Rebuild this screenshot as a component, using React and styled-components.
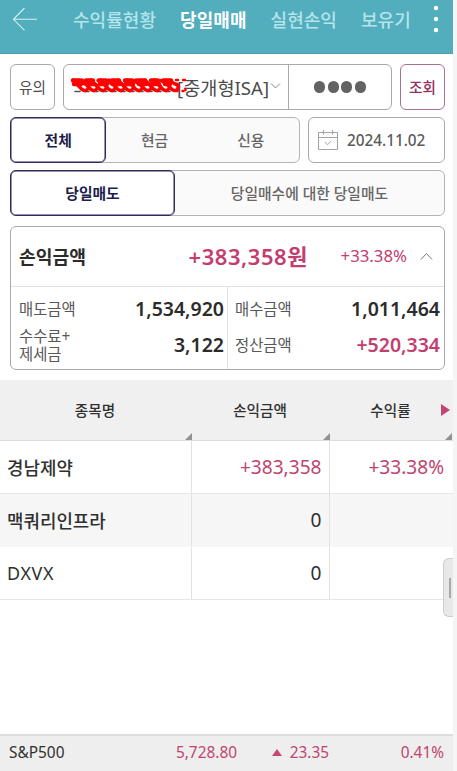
import React from "react";
import styled, { createGlobalStyle, css } from "styled-components";

const GlobalStyle = createGlobalStyle`
  * {
    box-sizing: border-box;
  }
  body {
    margin: 0;
    background-color: #f5f5f5;
    font-family: "Noto Sans", "Noto Sans CJK KR", sans-serif;
    color: #303030;
  }
`;

const Screen = styled.div`
  position: relative;
  width: 453px;
  height: 771px;
  background-color: #ffffff;
  display: flex;
  flex-direction: column;
  overflow: hidden;
  white-space: nowrap;
`;

const Header = styled.header`
  height: 54px;
  flex-shrink: 0;
  background-color: #52adbd;
  border-bottom: 1px solid #4ba3b3;
  display: flex;
  align-items: flex-start;
  padding: 4px 13px 0 12px;
`;

const BackIcon = styled.svg`
  width: 26px;
  height: 26px;
  margin-top: 2px;
`;

const Nav = styled.nav`
  flex: 1;
  display: flex;
  padding-left: 35px;
  gap: 24px;
`;

const NavItem = styled.span`
  font-size: 18px;
  line-height: 32px;
  letter-spacing: 0.05px;
  font-weight: ${({ $active }) => ($active ? 700 : 500)};
  color: ${({ $active }) => ($active ? "#ffffff" : "#b5e4ec")};
`;

const MoreIcon = styled.svg`
  width: 8px;
  height: 30px;
`;

const Filters = styled.section`
  padding: 10px 8px 0 10px;
  display: flex;
  flex-direction: column;
  gap: 7px;
`;

const FilterRow = styled.div`
  display: flex;
  justify-content: space-between;
  height: 46px;
`;

const Box = styled.div`
  border: 1px solid #a9a9a9;
  border-radius: 6px;
  background-color: #ffffff;
  display: flex;
  align-items: center;
`;

const SquareButton = styled.button`
  width: 45px;
  padding: 0 0 2px;
  border: 1px solid ${({ $accent }) => ($accent ? "#a9708f" : "#a9a9a9")};
  border-radius: 6px;
  background-color: #ffffff;
  color: ${({ $accent }) => ($accent ? "#93305f" : "#4c4c4c")};
  font-family: inherit;
  font-size: 14.6px;
  font-weight: ${({ $accent }) => ($accent ? 500 : 400)};
`;

const AccountBox = styled(Box)`
  width: 329px;
`;

const Account = styled.div`
  position: relative;
  width: 225px;
  height: 100%;
  border-right: 1px solid #a9a9a9;
  display: flex;
  align-items: center;
  justify-content: flex-end;
  gap: 1px;
  padding: 0 7px 2px 0;
  font-size: 18.6px;
  color: #4c4c4c;
`;

const Scribble = styled.svg`
  position: absolute;
  left: 6px;
  top: 12px;
  width: 120px;
  height: 18px;
`;

const Password = styled.div`
  flex: 1;
  display: flex;
  justify-content: center;
  gap: 2.4px;
`;

const Dot = styled.span`
  width: 11.2px;
  height: 11.2px;
  border-radius: 50%;
  background-color: #636363;
`;

const Segments = styled.div`
  width: ${({ $width }) => $width};
  display: flex;
  border: 1px solid #b4b4b4;
  border-radius: 6px;
  background-color: #fafafa;
`;

const Segment = styled.button`
  width: ${({ $width }) => $width};
  padding: 0 0 1px;
  border: none;
  background: none;
  font-family: inherit;
  font-size: 14.8px;
  font-weight: 500;
  color: #666666;
  ${({ $active }) =>
    $active &&
    css`
      margin: -1px 0 -1px -1px;
      border: 1px solid #2e2b58;
      border-radius: 6px;
      box-shadow: inset 0 0 0 0.5px #2e2b58;
      background-color: #ffffff;
      font-weight: 700;
      color: #201d4d;
    `}
`;

const DateBox = styled(Box)`
  width: 137px;
  padding-left: 9px;
  gap: 9px;
  font-size: 15.3px;
  font-weight: 500;
  color: #5a5a5a;
`;

const Card = styled.section`
  margin: 10px 8px 0 10px;
  height: 144px;
  flex-shrink: 0;
  border: 1px solid #a9a9a9;
  border-radius: 6px;
`;

const CardTop = styled.div`
  height: 60px;
  border-bottom: 1px solid #e2e2e2;
  display: flex;
  align-items: center;
  padding: 0 11px 1px 8px;
  color: #c43d70;
`;

const CardTitle = styled.h2`
  margin: 0;
  font-size: 18.2px;
  font-weight: 700;
  color: #2b2b2b;
`;

const Profit = styled.strong`
  flex: 1;
  padding-bottom: 2px;
  text-align: right;
  font-size: 22px;
  letter-spacing: 0.55px;
  margin-right: -1px;
  font-weight: 600;
`;

const Rate = styled.span`
  width: 100px;
  text-align: right;
  font-size: 16.8px;
  margin-right: 13px;
  padding-bottom: 1px;
`;

const CardBody = styled.div`
  height: 82px;
  display: flex;
`;

const CardColumn = styled.div`
  width: ${({ $width }) => $width};
  padding: ${({ $padding }) => $padding};
  ${({ $divided }) => $divided && "border-right: 1px solid #e2e2e2;"}
`;

const Figure = styled.div`
  height: 36px;
  display: flex;
  align-items: center;
  justify-content: space-between;
`;

const Label = styled.span`
  font-size: 15.4px;
  line-height: 18px;
  color: #585858;
`;

const Amount = styled.strong`
  padding-bottom: 3px;
  font-size: 19.5px;
  font-weight: 600;
  color: ${({ $up }) => ($up ? "#c43d70" : "#2b2b2b")};
`;

const Table = styled.section`
  margin-top: 10px;
  flex: 1;
`;

const Row = styled.div`
  display: grid;
  grid-template-columns: 192px 138px 1fr;
  height: 53px;
  background-color: ${({ $striped }) => ($striped ? "#f6f6f6" : "#ffffff")};
  border-bottom: 1px solid ${({ $striped }) => ($striped ? "#f6f6f6" : "#e6e6e6")};
`;

const HeadRow = styled(Row)`
  height: 61px;
  background-color: #f0f0f0;
  border-bottom: 1px solid #dcdcdc;
`;

const HeadCell = styled.div`
  position: relative;
  display: flex;
  align-items: center;
  justify-content: center;
  padding: 0 2px 1px 0;
  font-size: 14.6px;
  font-weight: 500;
  color: #303030;
  &::after {
    content: "";
    position: absolute;
    right: ${({ $last }) => ($last ? "1px" : "0")};
    bottom: 0;
    border-left: 7px solid transparent;
    border-bottom: 7px solid #919191;
  }
`;

const NextArrow = styled.span`
  position: absolute;
  right: 3px;
  top: 24px;
  border-left: 9px solid #c14473;
  border-top: 6px solid transparent;
  border-bottom: 6px solid transparent;
`;

const Cell = styled.div`
  display: flex;
  align-items: center;
  justify-content: flex-end;
  padding-right: 7.5px;
  border-right: 1px solid #e2e2e2;
  font-size: 19.1px;
  color: ${({ $up }) => ($up ? "#c0446f" : "#303030")};
  &:last-child {
    border-right: none;
    padding-right: 9px;
  }
`;

const NameCell = styled(Cell)`
  justify-content: flex-start;
  padding: 0 0 1px 7px;
  font-size: 17.9px;
  font-weight: ${({ $latin }) => ($latin ? 400 : 500)};
  letter-spacing: ${({ $latin }) => ($latin ? "0.7px" : "0")};
`;

const SideHandle = styled.div`
  position: absolute;
  right: 0;
  top: 558px;
  width: 10px;
  height: 59px;
  border: 1px solid #cdcdcd;
  border-right: none;
  border-radius: 6px 0 0 6px;
  background-color: #e8e8e8;
  display: flex;
  align-items: center;
  justify-content: flex-end;
  padding-right: 2px;
  &::before {
    content: "";
    width: 2px;
    height: 20px;
    background-color: #a9a9a9;
  }
`;

const Ticker = styled.footer`
  height: 37px;
  border-top: 2px solid #dddddd;
  background-color: #eeeeee;
  display: grid;
  grid-template-columns: 100px 128px 92px 1fr;
  align-items: center;
  padding: 0 9px 2px 9px;
  font-size: 15.4px;
  color: #c0446f;
  text-align: right;
`;

const TickerName = styled.span`
  text-align: left;
  color: #303030;
`;

const Change = styled.span`
  display: flex;
  align-items: center;
  justify-content: flex-end;
  gap: 8px;
  &::before {
    content: "";
    border-left: 5px solid transparent;
    border-right: 5px solid transparent;
    border-bottom: 7px solid #c64774;
  }
`;

const stocks = [
  { name: "경남제약", profit: "+383,358", rate: "+33.38%", up: true },
  { name: "맥쿼리인프라", profit: "0", rate: "" },
  { name: "DXVX", profit: "0", rate: "", latin: true },
];

const loops = [5, 14, 23, 32, 41, 50, 59, 68, 77, 86, 95];

function AccountScribble() {
  return (
    <Scribble viewBox="0 0 120 18" fill="none" strokeLinecap="round">
      <path d="M5 14.5h96" stroke="#555555" strokeWidth="1.6" strokeDasharray="5 4" />
      <path d="M3 3.5h98M4 7h96" stroke="#ff0000" strokeWidth="4.4" strokeDasharray="7 6" />
      {loops.map((x) => (
        <path
          key={x}
          d={`M${x - 2} 3l9 9.5q4 2.5 6-1t-4-5l-4-3`}
          stroke="#ff0000"
          strokeWidth="3.4"
          strokeLinejoin="round"
        />
      ))}
      <path
        d="M106 3h2m5 0h2M107.5 7v3m-1 4h1m5 0h1m2-2v1"
        stroke="#ff0000"
        strokeWidth="2.4"
      />
    </Scribble>
  );
}

function CalendarIcon() {
  return (
    <svg width="20" height="20" viewBox="0 0 20 20" fill="none" stroke="#a3a3a3">
      <path d="M.5 2.5h19v17H.5zM.5 7.5h19M5.5 0v4.5M14.5 0v4.5" />
      <path d="M7 12l2.5 2.8L13 11" />
    </svg>
  );
}

function App() {
  return (
    <>
      <GlobalStyle />
      <Screen>
        <Header>
          <BackIcon viewBox="0 0 26 26" fill="none" stroke="#d3f1f5" strokeWidth="1.1">
            <path d="M25 13.3H1.5M12.5 2L1.5 13.3l11 11" />
          </BackIcon>
          <Nav>
            <NavItem>수익률현황</NavItem>
            <NavItem $active>당일매매</NavItem>
            <NavItem>실현손익</NavItem>
            <NavItem>보유기</NavItem>
          </Nav>
          <MoreIcon viewBox="0 0 8 30" fill="#ffffff">
            <circle cx="4" cy="4" r="2.2" />
            <circle cx="4" cy="15" r="2.2" />
            <circle cx="4" cy="26" r="2.2" />
          </MoreIcon>
        </Header>

        <Filters>
          <FilterRow>
            <SquareButton>유의</SquareButton>
            <AccountBox>
              <Account>
                [중개형ISA]
                <svg width="11" height="8" viewBox="0 0 11 8" fill="none" stroke="#888888">
                  <path d="M1 1.5l4.5 4.5L10 1.5" />
                </svg>
                <AccountScribble />
              </Account>
              <Password>
                <Dot />
                <Dot />
                <Dot />
                <Dot />
              </Password>
            </AccountBox>
            <SquareButton $accent>조회</SquareButton>
          </FilterRow>
          <FilterRow>
            <Segments $width="290px">
              <Segment $active $width="97px">
                전체
              </Segment>
              <Segment $width="97px">현금</Segment>
              <Segment $width="97px">신용</Segment>
            </Segments>
            <DateBox>
              <CalendarIcon />
              2024.11.02
            </DateBox>
          </FilterRow>
          <FilterRow>
            <Segments $width="435px">
              <Segment $active $width="165px">
                당일매도
              </Segment>
              <Segment $width="269px">당일매수에 대한 당일매도</Segment>
            </Segments>
          </FilterRow>
        </Filters>

        <Card>
          <CardTop>
            <CardTitle>손익금액</CardTitle>
            <Profit>+383,358원</Profit>
            <Rate>+33.38%</Rate>
            <svg width="13" height="9" viewBox="0 0 13 9" fill="none" stroke="#777777">
              <path d="M1 7.5l5.5-6 5.5 6" />
            </svg>
          </CardTop>
          <CardBody>
            <CardColumn $width="217px" $padding="5px 3px 0 8px" $divided>
              <Figure>
                <Label>매도금액</Label>
                <Amount>1,534,920</Amount>
              </Figure>
              <Figure>
                <Label>
                  수수료+
                  <br />
                  제세금
                </Label>
                <Amount>3,122</Amount>
              </Figure>
            </CardColumn>
            <CardColumn $width="216px" $padding="5px 4px 0 7px">
              <Figure>
                <Label>매수금액</Label>
                <Amount>1,011,464</Amount>
              </Figure>
              <Figure>
                <Label>정산금액</Label>
                <Amount $up>+520,334</Amount>
              </Figure>
            </CardColumn>
          </CardBody>
        </Card>

        <Table>
          <HeadRow>
            <HeadCell>종목명</HeadCell>
            <HeadCell>손익금액</HeadCell>
            <HeadCell $last>
              수익률
              <NextArrow />
            </HeadCell>
          </HeadRow>
          {stocks.map((stock, i) => (
            <Row key={stock.name} $striped={i % 2 === 1}>
              <NameCell $latin={stock.latin}>{stock.name}</NameCell>
              <Cell $up={stock.up}>{stock.profit}</Cell>
              <Cell $up={stock.up}>{stock.rate}</Cell>
            </Row>
          ))}
        </Table>

        <Ticker>
          <TickerName>S&amp;P500</TickerName>
          <span>5,728.80</span>
          <Change>23.35</Change>
          <span>0.41%</span>
        </Ticker>
        <SideHandle />
      </Screen>
    </>
  );
}

export default App;
